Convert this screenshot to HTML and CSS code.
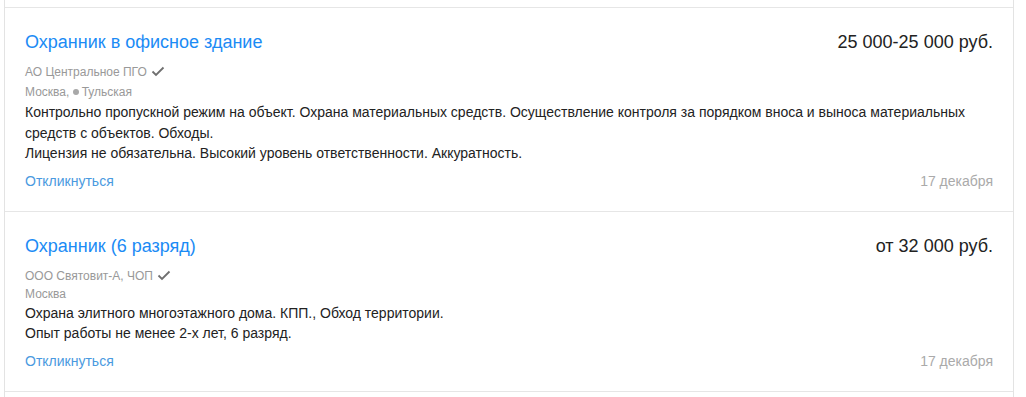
FILE: index.html
```html
<!DOCTYPE html>
<html lang="ru">
<head>
<meta charset="utf-8">
<title>Вакансии</title>
<link rel="stylesheet" href="styles.css">
</head>
<body>
<div class="list">
  <div class="vacancy vacancy-cut-top"></div>
  <div class="vacancy">
    <div class="head">
      <a class="title" href="#">Охранник в офисное здание</a>
      <div class="salary">25 000-25 000 руб.</div>
    </div>
    <div class="company">АО Центральное ПГО <svg class="check" width="14" height="11" viewBox="0 0 14 11"><path d="M1.5 5.5 L5 9 L12.5 1.5" fill="none" stroke="#6f6f6f" stroke-width="1.8"/></svg></div>
    <div class="location location-metro">Москва, <span class="metro-dot"></span>Тульская</div>
    <div class="desc">
      <p>Контрольно пропускной режим на объект. Охрана материальных средств. Осуществление контроля за порядком вноса и выноса материальных средств с объектов. Обходы.</p>
      <p>Лицензия не обязательна. Высокий уровень ответственности. Аккуратность.</p>
    </div>
    <div class="foot">
      <a class="respond" href="#">Откликнуться</a>
      <span class="date">17 декабря</span>
    </div>
  </div>
  <div class="vacancy">
    <div class="head">
      <a class="title" href="#">Охранник (6 разряд)</a>
      <div class="salary">от 32 000 руб.</div>
    </div>
    <div class="company">ООО Святовит-А, ЧОП <svg class="check" width="14" height="11" viewBox="0 0 14 11"><path d="M1.5 5.5 L5 9 L12.5 1.5" fill="none" stroke="#6f6f6f" stroke-width="1.8"/></svg></div>
    <div class="location">Москва</div>
    <div class="desc">
      <p>Охрана элитного многоэтажного дома. КПП., Обход территории.</p>
      <p>Опыт работы не менее 2-х лет, 6 разряд.</p>
    </div>
    <div class="foot">
      <a class="respond" href="#">Откликнуться</a>
      <span class="date">17 декабря</span>
    </div>
  </div>
  <div class="vacancy vacancy-next"></div>
</div>
</body>
</html>
```

FILE: styles.css
```css
html, body {
  margin: 0;
  padding: 0;
  background: #fff;
  height: 397px;
  overflow: hidden;
}
body {
  font-family: "Liberation Sans", Arial, sans-serif;
  color: #333;
}
.list {
  margin-left: 4px;
  width: 1008px;
  border-left: 1px solid #e3e3e3;
  border-right: 1px solid #e3e3e3;
  min-height: 397px;
}
.vacancy {
  border-bottom: 1px solid #e6e6e6;
  padding: 23px 20px 20px 20px;
}
.vacancy-cut-top {
  height: 7px;
  padding: 0;
}
.vacancy-next {
  height: 20px;
  padding: 0;
  border-bottom: none;
}
.head {
  display: flex;
  justify-content: space-between;
  align-items: flex-start;
}
.title {
  font-size: 18px;
  line-height: 22px;
  color: #1b8bf5;
  text-decoration: none;
}
.salary {
  font-size: 18px;
  line-height: 22px;
  color: #222;
}
.company {
  margin-top: 9px;
  font-size: 12px;
  line-height: 20px;
  color: #999;
  display: flex;
  align-items: center;
}
.check {
  margin-left: 4px;
  margin-top: -1px;
}
.location {
  font-size: 12px;
  line-height: 17px;
  color: #999;
}
.location-metro {
  line-height: 20px;
}
.metro-dot {
  display: inline-block;
  width: 6px;
  height: 6px;
  border-radius: 50%;
  background: #a8a8a8;
  margin-right: 3px;
  vertical-align: 1px;
}
.desc {
  font-size: 14px;
  line-height: 20.6px;
  color: #222;
}
.desc p {
  margin: 0;
}
.foot {
  margin-top: 7px;
  display: flex;
  justify-content: space-between;
  align-items: baseline;
  line-height: 20px;
}
.respond {
  font-size: 14px;
  color: #4a9ae0;
  text-decoration: none;
}
.date {
  font-size: 14px;
  color: #aaa;
}
```
